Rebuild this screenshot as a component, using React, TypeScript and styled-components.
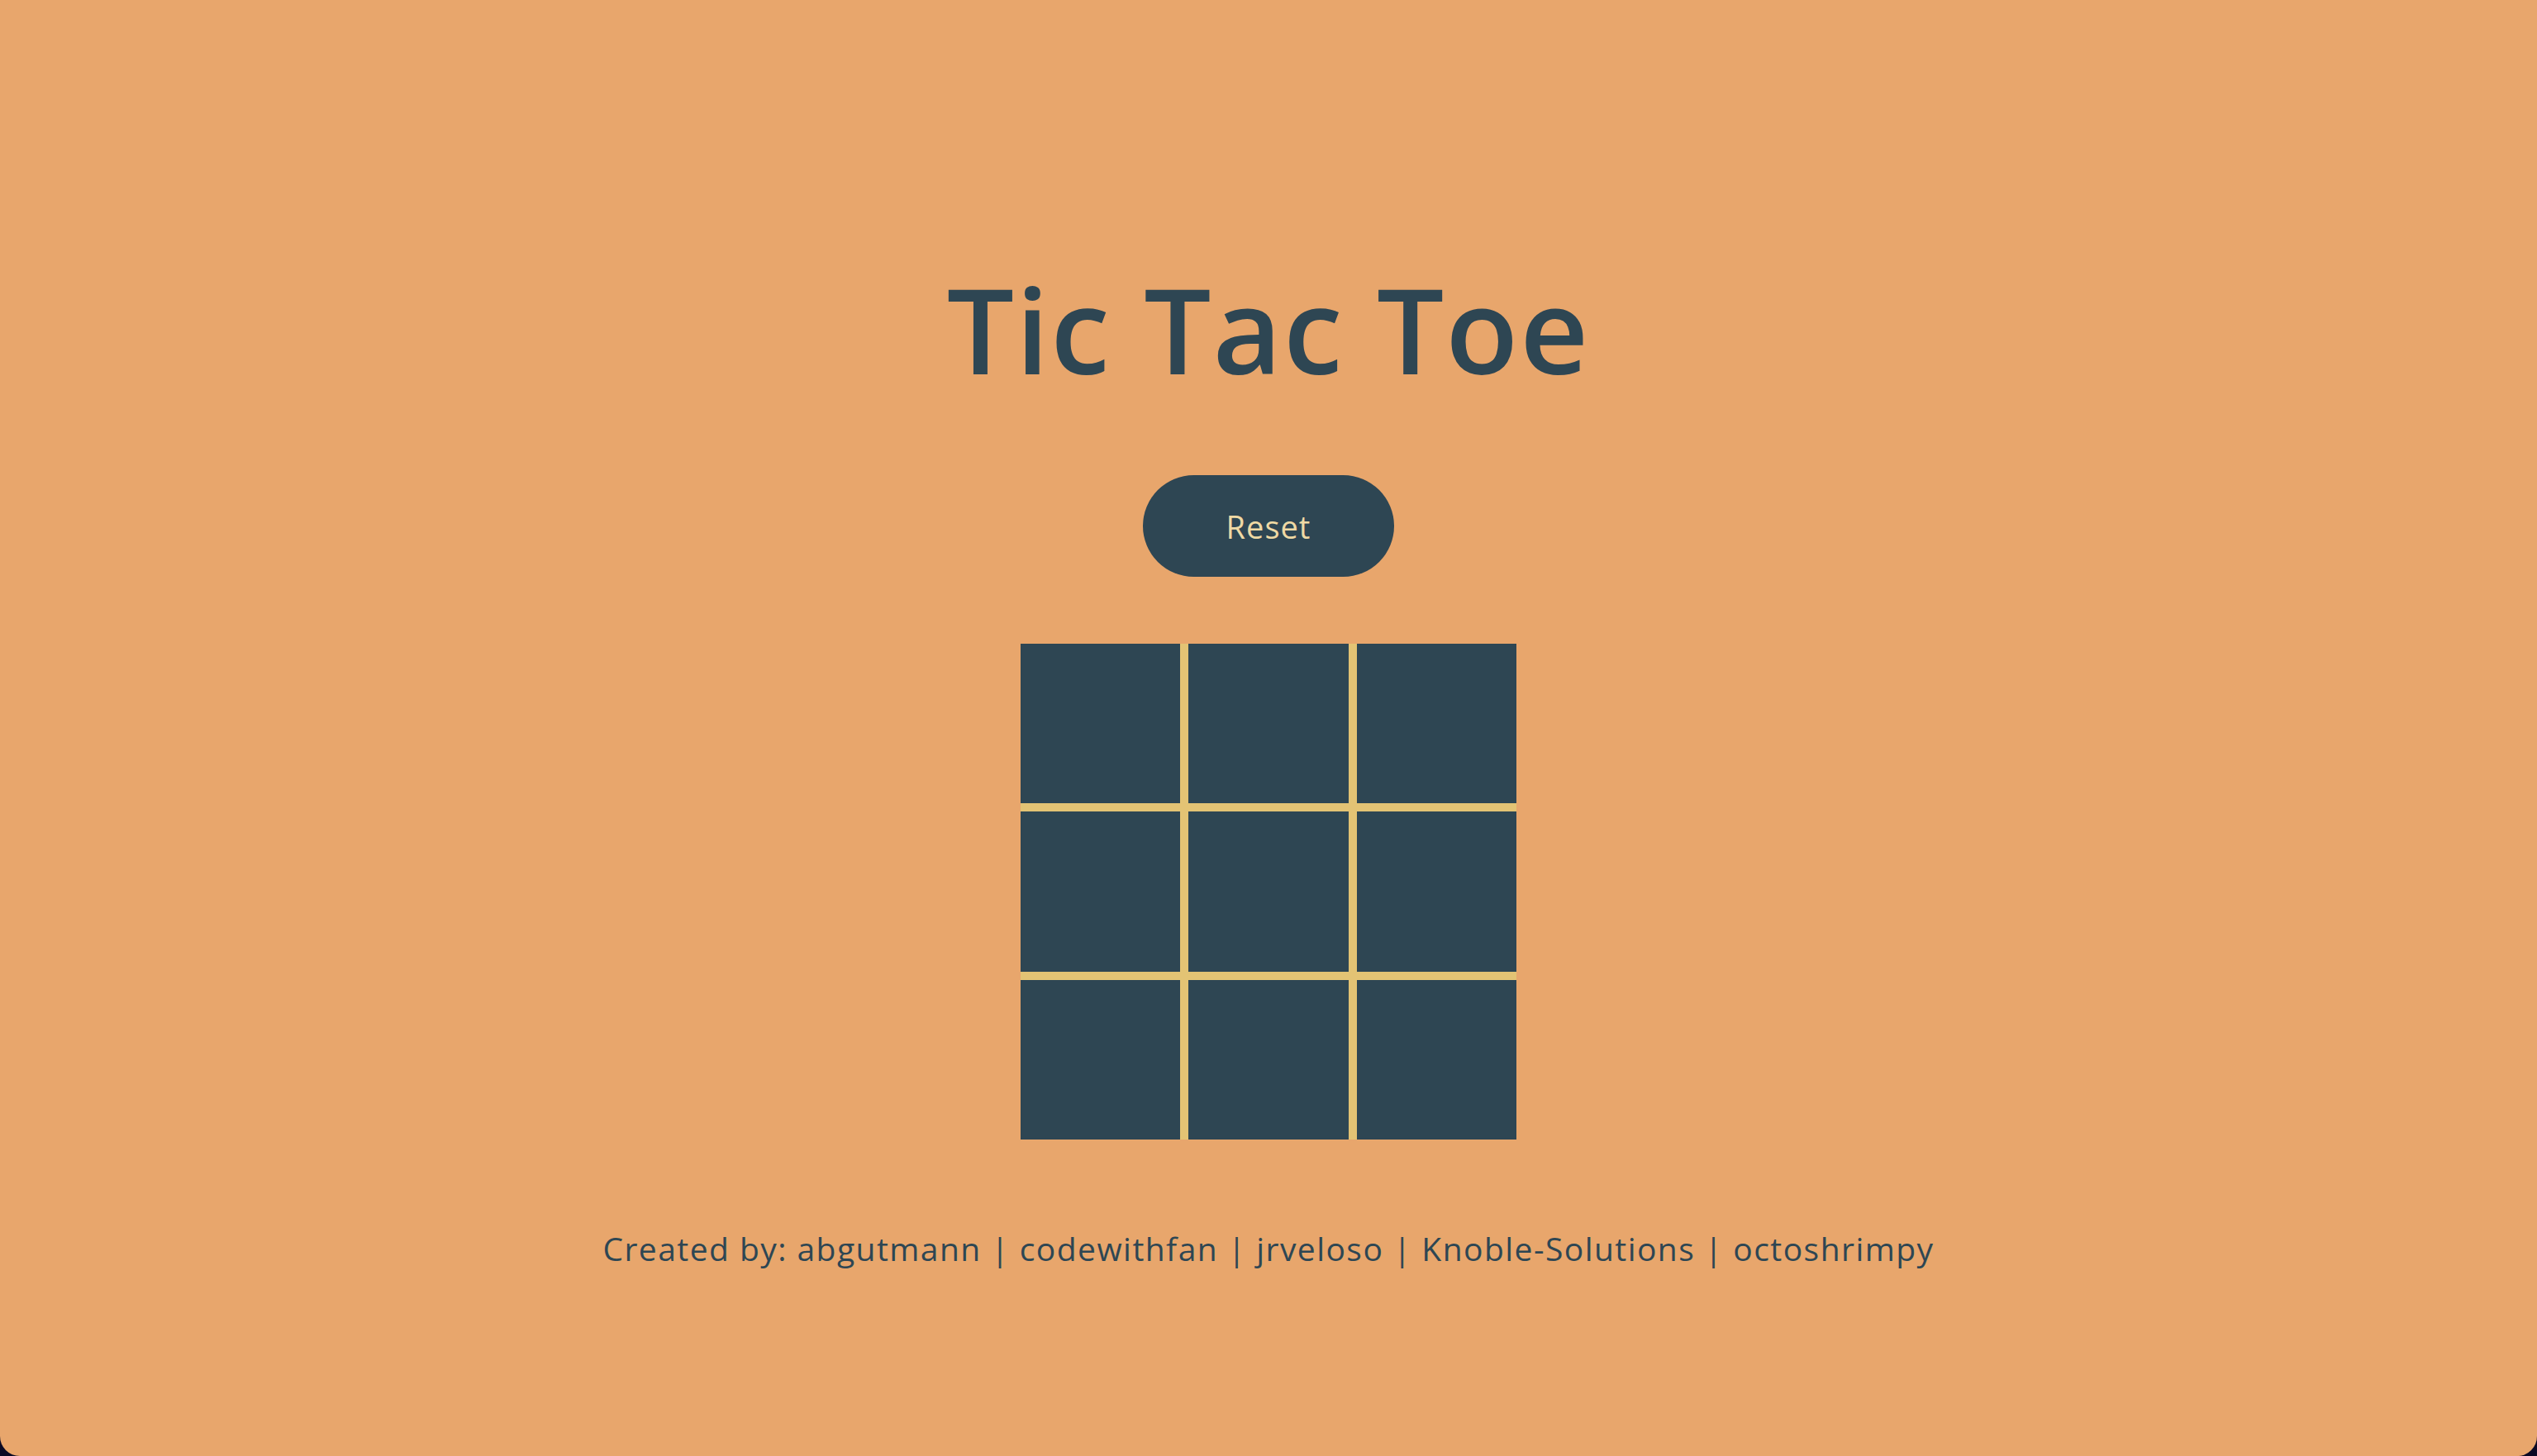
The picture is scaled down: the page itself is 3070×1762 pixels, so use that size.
import * as React from 'react'
import styled, { createGlobalStyle } from 'styled-components'

const colors = {
  page: '#0b0a24',
  background: '#e8a66c',
  ink: '#2e4653',
  grid: '#e3c374',
  cream: '#efd9a4',
}

const GlobalStyle = createGlobalStyle`
  html, body {
    margin: 0;
    padding: 0;
    background: ${colors.page};
  }
`

const StyledApp = styled.div`
  display: flex;
  flex-direction: column;
  align-items: center;
  height: 100vh;
  box-sizing: border-box;
  background-color: ${colors.background};
  border-radius: 0 0 24px 24px;
  font-family: 'Open Sans', 'Liberation Sans', sans-serif;
  color: ${colors.ink};
`

const Title = styled.h1`
  margin: 325px 0 0;
  font-size: 144px;
  font-weight: 600;
  line-height: 1;
  letter-spacing: 2px;
`

const ResetButton = styled.button`
  margin-top: 106px;
  width: 304px;
  height: 123px;
  border: none;
  border-radius: 62px;
  background-color: ${colors.ink};
  color: ${colors.cream};
  font-family: inherit;
  font-size: 38px;
  font-weight: 500;
  letter-spacing: 1px;
  cursor: pointer;
`

const Board = styled.div`
  margin-top: 81px;
  display: grid;
  grid-template-columns: repeat(3, 1fr);
  grid-template-rows: repeat(3, 1fr);
  gap: 10px;
  width: 600px;
  height: 600px;
  background-color: ${colors.grid};
`

const Square = styled.button`
  border: none;
  padding: 0;
  background-color: ${colors.ink};
`

const Credits = styled.p`
  margin: 112px 0 0;
  font-size: 39px;
  line-height: 1;
  letter-spacing: 1.45px;
`

const authors = [
  'abgutmann',
  'codewithfan',
  'jrveloso',
  'Knoble-Solutions',
  'octoshrimpy',
]

const App: React.FunctionComponent = () => {
  const [squares] = React.useState<string[]>(Array(9).fill(''))

  return (
    <>
      <GlobalStyle />
      <StyledApp>
        <Title>Tic Tac Toe</Title>
        <ResetButton>Reset</ResetButton>
        <Board>
          {squares.map((value, i) => (
            <Square key={i}>{value}</Square>
          ))}
        </Board>
        <Credits>Created by: {authors.join(' | ')}</Credits>
      </StyledApp>
    </>
  )
}

export default App
